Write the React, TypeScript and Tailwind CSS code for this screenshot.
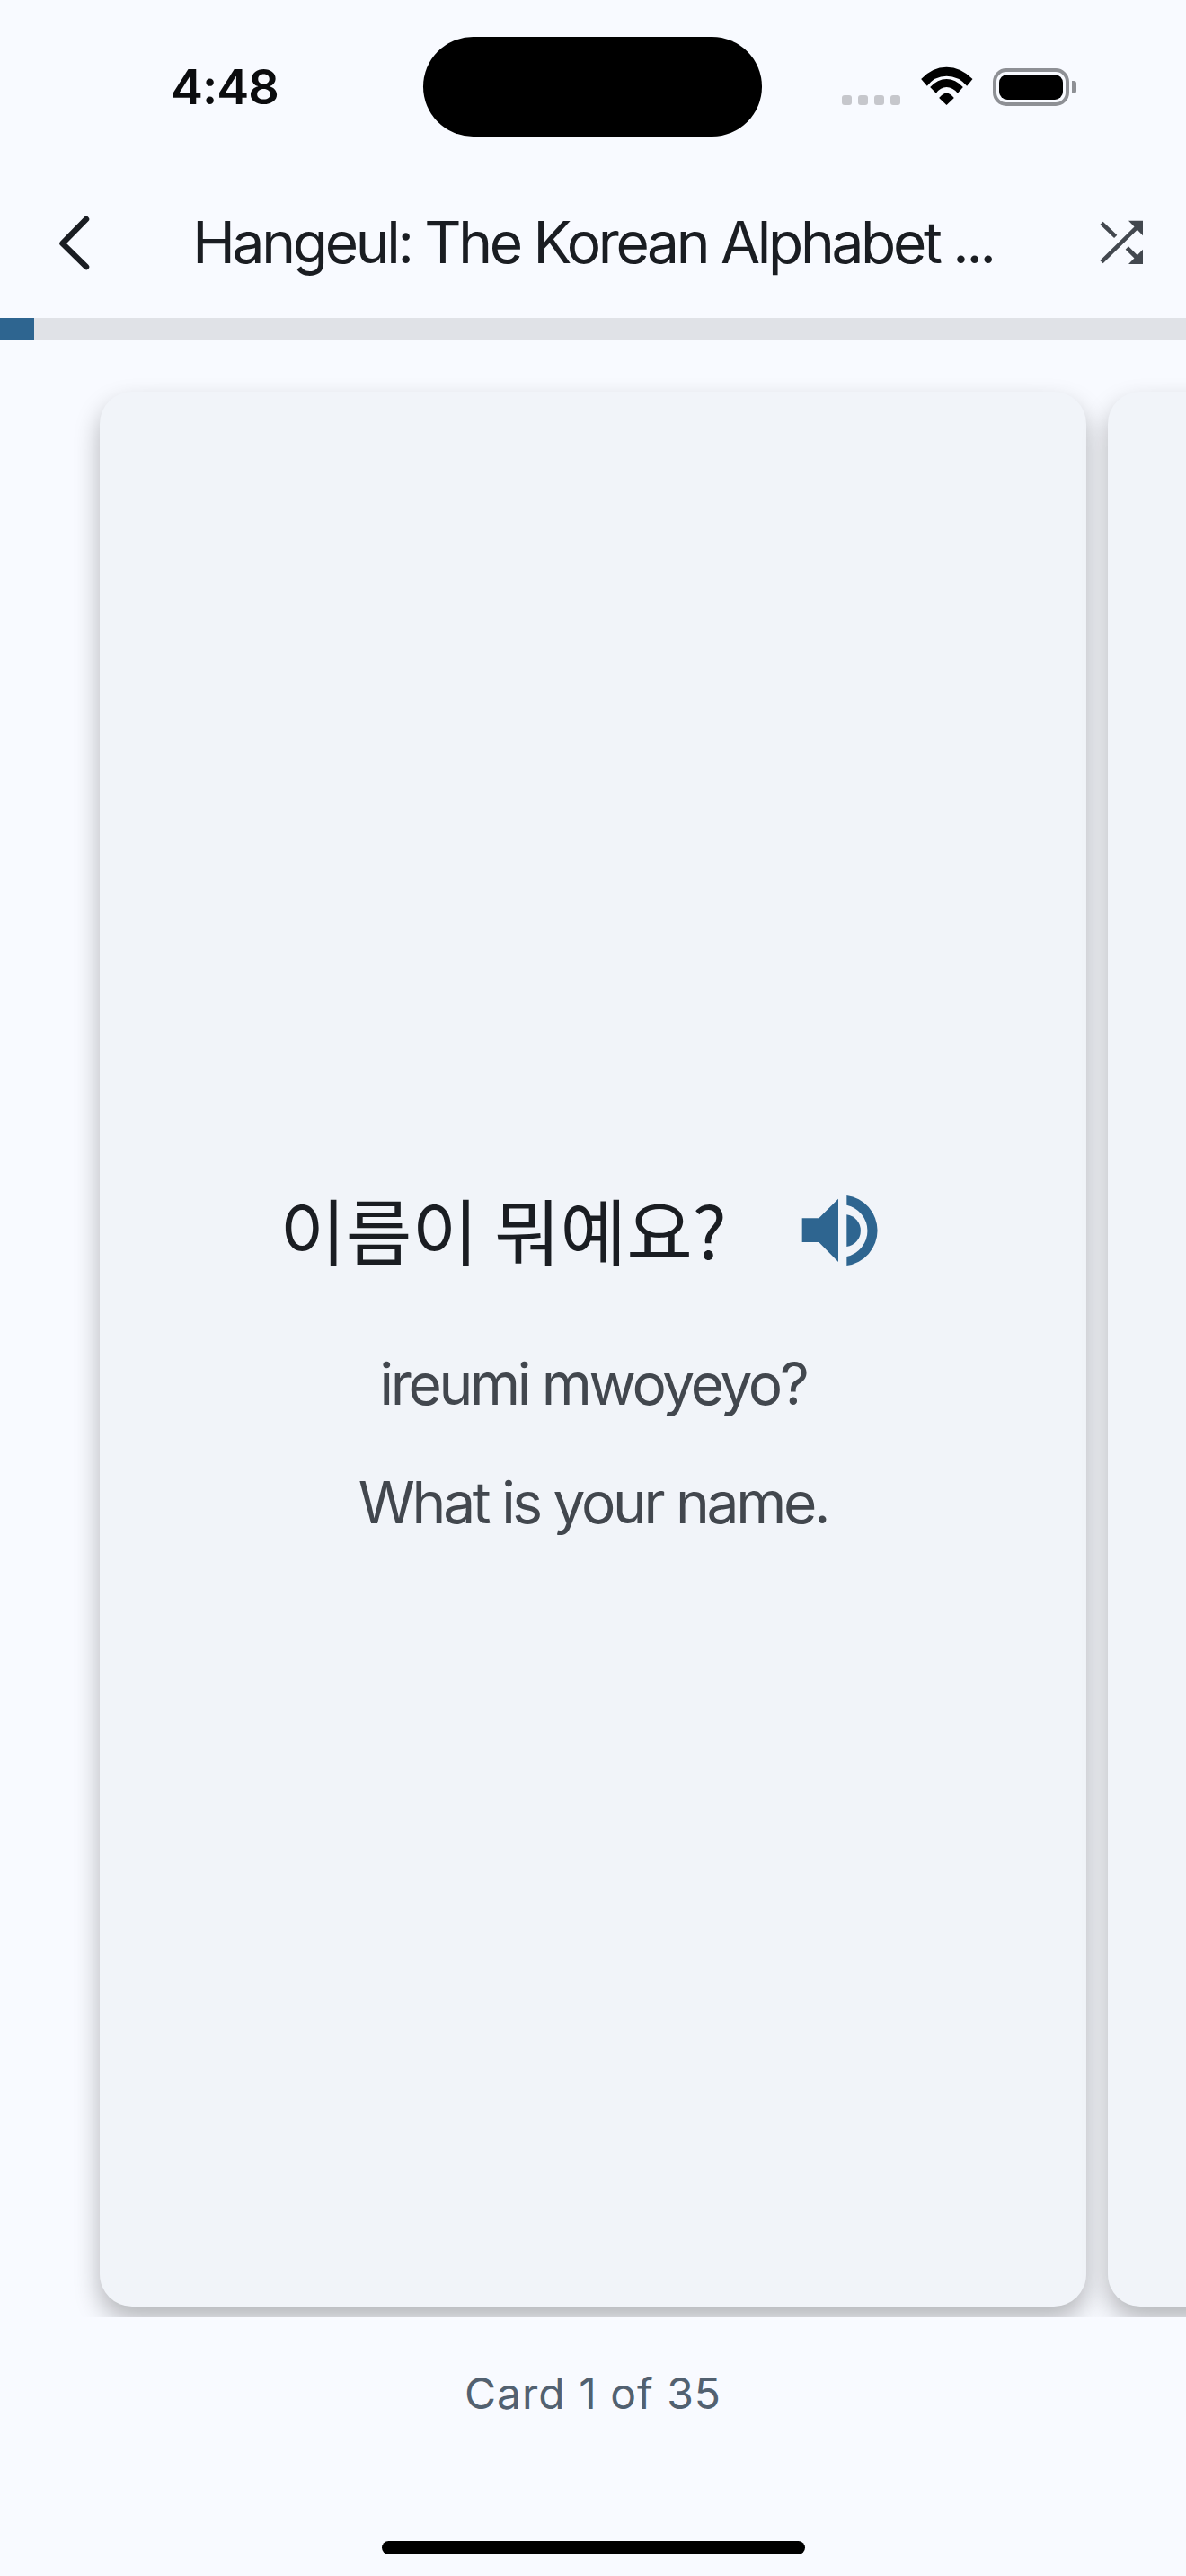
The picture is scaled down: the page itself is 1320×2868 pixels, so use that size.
import type { ReactNode } from "react";

const sans = "font-['Inter','Liberation_Sans',sans-serif]";

function StatusBar() {
  return (
    <div className="flex h-[192px] shrink-0 pt-[41px]">
      <div className="w-[471px] pl-[190px] pt-[26px]">
        <span className="block text-[54px] leading-[60px] font-semibold tracking-[-1px] text-[#0b0c0e]">4:48</span>
      </div>
      <div className="h-[111px] w-[377px] rounded-[56px] bg-black" />
      <div className="flex items-end pb-[74px] pl-[89px]">
        <div className="flex gap-[7px] pb-px">
          <span className="h-[11px] w-[11px] rounded-[3px] bg-[#c6c7cc]" />
          <span className="h-[11px] w-[11px] rounded-[3px] bg-[#c6c7cc]" />
          <span className="h-[11px] w-[11px] rounded-[3px] bg-[#c6c7cc]" />
          <span className="h-[11px] w-[11px] rounded-[3px] bg-[#c6c7cc]" />
        </div>
        <svg className="ml-[18px] h-[45px] w-[67px]" viewBox="300 40 200 135">
          <path d="M315 85Q352 45 400 45T487 85L468 108Q440 75 400 75T335 108Z" fill="#000" />
          <path d="M345 112Q370 85 400 85T455 112L437 132Q420 112 400 112T365 132Z" fill="#000" />
          <path d="M375 148Q388 132 400 132T425 148L400 172Z" fill="#000" />
        </svg>
        <div className="ml-[18px] flex items-center">
          <div className="h-[42px] w-[85px] rounded-[15px] border-[4px] border-[#8e9095] p-[3px]">
            <div className="h-full w-full rounded-[9px] bg-black" />
          </div>
          <span className="ml-[3px] h-[14px] w-[5px] rounded-r-[3px] bg-[#8e9095]" />
        </div>
      </div>
    </div>
  );
}

function NavBar() {
  return (
    <div className="flex h-[162px] shrink-0 items-center pb-[6px]">
      <div className="flex w-[180px] pl-[60px]">
        <svg width="48" height="64" viewBox="0 0 48 64" fill="none">
          <path d="M36 6 9.5 33 36 59" stroke="#1a1d22" strokeWidth="6.5" strokeLinecap="round" strokeLinejoin="round" />
        </svg>
      </div>
      <h1 className="flex-1 text-center text-[64px] leading-[80px] font-normal tracking-[-3.3px] whitespace-nowrap text-[#1a1d22]">
        Hangeul: The Korean Alphabet ...
      </h1>
      <div className="flex w-[180px] justify-end pr-[30px]">
        <svg width="90" height="80" viewBox="0 0 270 240" fill="none">
          <path d="M78 55 125 100M78 185 200 65M163 138 205 180" stroke="#43484f" strokeWidth="14" />
          <path d="M168 47H216V97ZM216 143V192H168Z" fill="#43484f" />
        </svg>
      </div>
    </div>
  );
}

function Speaker() {
  return (
    <svg width="100" height="100" viewBox="0 0 300 300" className="shrink-0">
      <path d="M32 112H88L153 47V258L88 192H32Z" fill="#2e6590" />
      <path d="M181 100A54 54 0 0 1 181 207Z" fill="#2e6590" />
      <path d="M181 36A118 118 0 0 1 181 270V240A88 88 0 0 0 181 68Z" fill="#2e6590" />
    </svg>
  );
}

function Card({ children }: { children?: ReactNode }) {
  return (
    <div className="flex h-[2132px] w-[1098px] shrink-0 flex-col items-center justify-center rounded-[36px] bg-[#f1f4f9] pt-[20px] shadow-[0_14px_28px_rgba(0,0,0,0.28)]">
      {children}
    </div>
  );
}

export default function App() {
  return (
    <div className={`flex h-[2868px] w-[1320px] flex-col overflow-hidden bg-[#f8faff] ${sans}`}>
      <StatusBar />
      <NavBar />
      <div className="h-[24px] shrink-0 bg-[#e0e2e7]">
        <div className="h-full w-[38px] bg-[#2e6590]" />
      </div>
      <div className="flex h-[2202px] shrink-0 gap-[24px] overflow-hidden pt-[58px] pl-[111px]">
        <Card>
          <div className="flex items-center pr-[27px]">
            <span className="mb-[4px] font-['Noto_Sans_CJK_KR','Inter',sans-serif] text-[80px] leading-[120px] font-normal text-[#1a1d22]">
              이름이 뭐예요?
            </span>
            <div className="ml-[73px]">
              <Speaker />
            </div>
          </div>
          <p className="mt-[66px] text-[64px] leading-[88px] tracking-[-3.3px] text-[#42474e]">ireumi mwoyeyo?</p>
          <p className="mt-[44px] text-[64px] leading-[88px] tracking-[-3.3px] text-[#42474e]">What is your name.</p>
        </Card>
        <Card />
      </div>
      <div className="flex flex-1 flex-col items-center">
        <p className="mt-[56px] text-[48px] leading-[58px] tracking-[1px] text-[#526170]">Card 1 of 35</p>
        <div className="mt-[135px] h-[15px] w-[471px] rounded-full bg-black" />
      </div>
    </div>
  );
}
